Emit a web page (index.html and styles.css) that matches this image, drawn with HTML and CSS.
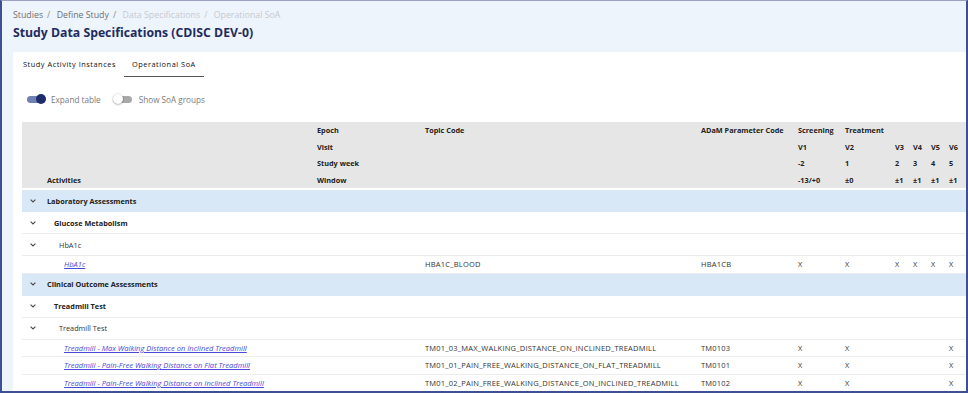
FILE: index.html
```html
<!DOCTYPE html>
<html lang="en">
<head>
<meta charset="utf-8">
<title>Study Data Specifications</title>
<link rel="stylesheet" href="styles.css">
</head>
<body>
<div class="frame">
  <nav class="crumbs">
    <span class="crumb">Studies</span><span class="sep">/</span>
    <span class="crumb">Define Study</span><span class="sep">/</span>
    <span class="crumb dim">Data Specifications</span><span class="sep dim">/</span>
    <span class="crumb dim">Operational SoA</span>
  </nav>
  <h1 class="title">Study Data Specifications (CDISC DEV-0)</h1>
  <section class="card">
    <div class="tabs">
      <span class="tab">Study Activity Instances</span>
      <span class="tab active">Operational SoA</span>
    </div>
    <div class="toggles">
      <label class="toggle on"><span class="track"></span><span class="knob"></span></label>
      <span class="tlabel">Expand table</span>
      <label class="toggle off"><span class="track"></span><span class="knob"></span></label>
      <span class="tlabel">Show SoA groups</span>
    </div>
    <div class="table-wrap">
      <table class="soa">
        <colgroup>
          <col class="c-act"><col class="c-lab"><col class="c-topic"><col class="c-adam">
          <col class="c-v1"><col class="c-v2"><col class="c-vn"><col class="c-vn"><col class="c-vn"><col class="c-vn"><col class="c-vn"><col class="c-vn">
        </colgroup>
        <thead>
          <tr><th></th><th>Epoch</th><th>Topic Code</th><th>ADaM Parameter Code</th><th>Screening</th><th>Treatment</th><th></th><th></th><th></th><th></th><th></th><th></th></tr>
          <tr><th></th><th>Visit</th><th></th><th></th><th>V1</th><th>V2</th><th>V3</th><th>V4</th><th>V5</th><th>V6</th><th>V7</th><th></th></tr>
          <tr><th></th><th>Study week</th><th></th><th></th><th>-2</th><th>1</th><th>2</th><th>3</th><th>4</th><th>5</th><th>6</th><th></th></tr>
          <tr class="last"><th class="act-h">Activities</th><th>Window</th><th></th><th></th><th>-13/+0</th><th>±0</th><th>±1</th><th>±1</th><th>±1</th><th>±1</th><th>±1</th><th></th></tr>
        </thead>
        <tbody>
          <tr class="grp soa-group"><td colspan="12"><span class="act l1"><svg class="chev" viewBox="0 0 6 4"><path d="M0.6 0.6 L3 3 L5.4 0.6"/></svg><b>Laboratory Assessments</b></span></td></tr>
          <tr class="grp"><td colspan="12"><span class="act l2"><svg class="chev" viewBox="0 0 6 4"><path d="M0.6 0.6 L3 3 L5.4 0.6"/></svg><b>Glucose Metabolism</b></span></td></tr>
          <tr class="grp"><td colspan="12"><span class="act l3"><svg class="chev" viewBox="0 0 6 4"><path d="M0.6 0.6 L3 3 L5.4 0.6"/></svg>HbA1c</span></td></tr>
          <tr class="item"><td class="lnk-cell"><a href="#">HbA1c</a></td><td></td><td class="code">HBA1C_BLOOD</td><td class="code">HBA1CB</td><td>X</td><td>X</td><td>X</td><td>X</td><td>X</td><td>X</td><td>X</td><td></td></tr>
          <tr class="grp soa-group"><td colspan="12"><span class="act l1"><svg class="chev" viewBox="0 0 6 4"><path d="M0.6 0.6 L3 3 L5.4 0.6"/></svg><b>Clinical Outcome Assessments</b></span></td></tr>
          <tr class="grp"><td colspan="12"><span class="act l2"><svg class="chev" viewBox="0 0 6 4"><path d="M0.6 0.6 L3 3 L5.4 0.6"/></svg><b>Treadmill Test</b></span></td></tr>
          <tr class="grp"><td colspan="12"><span class="act l3"><svg class="chev" viewBox="0 0 6 4"><path d="M0.6 0.6 L3 3 L5.4 0.6"/></svg>Treadmill Test</span></td></tr>
          <tr class="item"><td class="lnk-cell"><a href="#">Treadmill - Max Walking Distance on Inclined Treadmill</a></td><td></td><td class="code">TM01_03_MAX_WALKING_DISTANCE_ON_INCLINED_TREADMILL</td><td class="code">TM0103</td><td>X</td><td>X</td><td></td><td></td><td></td><td>X</td><td></td><td></td></tr>
          <tr class="item"><td class="lnk-cell"><a href="#">Treadmill - Pain-Free Walking Distance on Flat Treadmill</a></td><td></td><td class="code">TM01_01_PAIN_FREE_WALKING_DISTANCE_ON_FLAT_TREADMILL</td><td class="code">TM0101</td><td>X</td><td>X</td><td></td><td></td><td></td><td>X</td><td></td><td></td></tr>
          <tr class="item"><td class="lnk-cell"><a href="#">Treadmill - Pain-Free Walking Distance on Inclined Treadmill</a></td><td></td><td class="code">TM01_02_PAIN_FREE_WALKING_DISTANCE_ON_INCLINED_TREADMILL</td><td class="code">TM0102</td><td>X</td><td>X</td><td></td><td></td><td></td><td>X</td><td></td><td></td></tr>
        </tbody>
      </table>
    </div>
  </section>
</div>
</body>
</html>
```
FILE: styles.css
```css
* { box-sizing: border-box; }
html, body { margin: 0; padding: 0; }
body { font-family: "Open Sans", "Noto Sans", sans-serif; background: #ffffff; }

.frame {
  width: 968px;
  height: 393px;
  overflow: hidden;
  background: #eef4fc;
  border: 2px solid #3f4f95;
  border-top: 1px solid #9aa2c0;
  display: flex;
  flex-direction: column;
}

.crumbs {
  padding: 8px 0 0 11px;
  height: 21px;
  font-size: 8.8px;
  line-height: 12px;
  color: #6f6f6f;
  white-space: nowrap;
}
.crumbs .sep { margin: 0 4px; color: #8a8a8a; }
.crumbs .dim { color: #c6c9cf; }

.title {
  margin: 0;
  padding-left: 11px;
  height: 30px;
  padding-top: 2px;
  font-size: 12.25px;
  line-height: 17px;
  font-weight: 700;
  color: #1f2c5e;
  white-space: nowrap;
}

.card {
  flex: 1;
  margin-left: 11px;
  background: #ffffff;
  overflow: hidden;
}

.tabs {
  display: flex;
  padding-left: 2px;
  height: 25px;
}
.tab {
  padding: 7px 8px 0 8px;
  font-size: 7.4px;
  letter-spacing: 0.07em;
  line-height: 10px;
  font-weight: 400;
  color: #111111;
  white-space: nowrap;
}
.tab.active { border-bottom: 1.5px solid #555555; }

.toggles {
  display: flex;
  align-items: center;
  height: 14px;
  margin-top: 15px;
  padding-left: 13px;
}
.toggle {
  position: relative;
  width: 20px;
  height: 14px;
  display: inline-block;
}
.toggle .track {
  position: absolute;
  left: 1px;
  right: 1px;
  top: 3.5px;
  height: 7px;
  border-radius: 4px;
}
.toggle .knob {
  position: absolute;
  top: 2px;
  width: 10px;
  height: 10px;
  border-radius: 50%;
}
.toggle.on .track { background: #6f80b2; }
.toggle.on .knob { right: 0; background: #1c2c6c; }
.toggle.off { margin-left: 12px; }
.toggle.off .track { background: #a9a9a9; left: 3px; }
.toggle.off .knob { left: 0; background: #ffffff; box-shadow: 0 0.5px 2px rgba(0,0,0,0.45); }
.tlabel {
  margin-left: 5px;
  font-size: 8.2px;
  color: #7a7a7a;
  white-space: nowrap;
}
.toggle.off + .tlabel { margin-left: 6px; }

.table-wrap {
  margin-top: 16px;
  padding-left: 9px;
  width: 1100px;
}

.soa {
  table-layout: fixed;
  border-collapse: separate;
  border-spacing: 0;
  width: 976px;
  font-size: 7.3px;
  color: #333333;
}
.c-act { width: 290px; }
.c-lab { width: 108px; }
.c-topic { width: 276px; }
.c-adam { width: 97px; }
.c-v1 { width: 47px; }
.c-v2 { width: 50px; }
.c-vn { width: 18px; }

.soa th {
  background: #e6e6e6;
  height: 16.5px;
  padding: 0 0 0 5px;
  text-align: left;
  font-weight: 700;
  color: #222222;
  white-space: nowrap;
  overflow: visible;
  line-height: 10px;
}
.soa thead tr.last th { border-bottom: 2px solid #ffffff; height: 18.5px; }
.soa th.act-h { padding-left: 25px; }

.soa td {
  padding: 0 0 0 5px;
  white-space: nowrap;
  border-bottom: 1px solid #ececec;
  line-height: 10px;
  vertical-align: middle;
}
.soa td.code { font-size: 7.5px; letter-spacing: 0.22px; }
.soa tr.grp td { height: 22px; padding-left: 8px; }
.soa tr.soa-group td { background: #d9e8f6; border-bottom-color: #d9e8f6; }
.soa tr.item td { height: 17.5px; }
.soa td.lnk-cell { padding-left: 42px; font-size: 7.55px; }

.act { display: flex; align-items: center; }
.chev {
  width: 6px;
  height: 4px;
  fill: none;
  stroke: #4a4a4a;
  stroke-width: 1.1;
}
.act.l1 b { margin-left: 11px; }
.act.l2 b { margin-left: 18px; }
.act.l3 { color: #333333; }
.act.l3 .chev { margin-right: 23px; }
.act b { font-weight: 700; color: #222222; }

.soa a {
  color: #4a4ad8;
  font-style: italic;
  text-decoration: underline;
}
```
